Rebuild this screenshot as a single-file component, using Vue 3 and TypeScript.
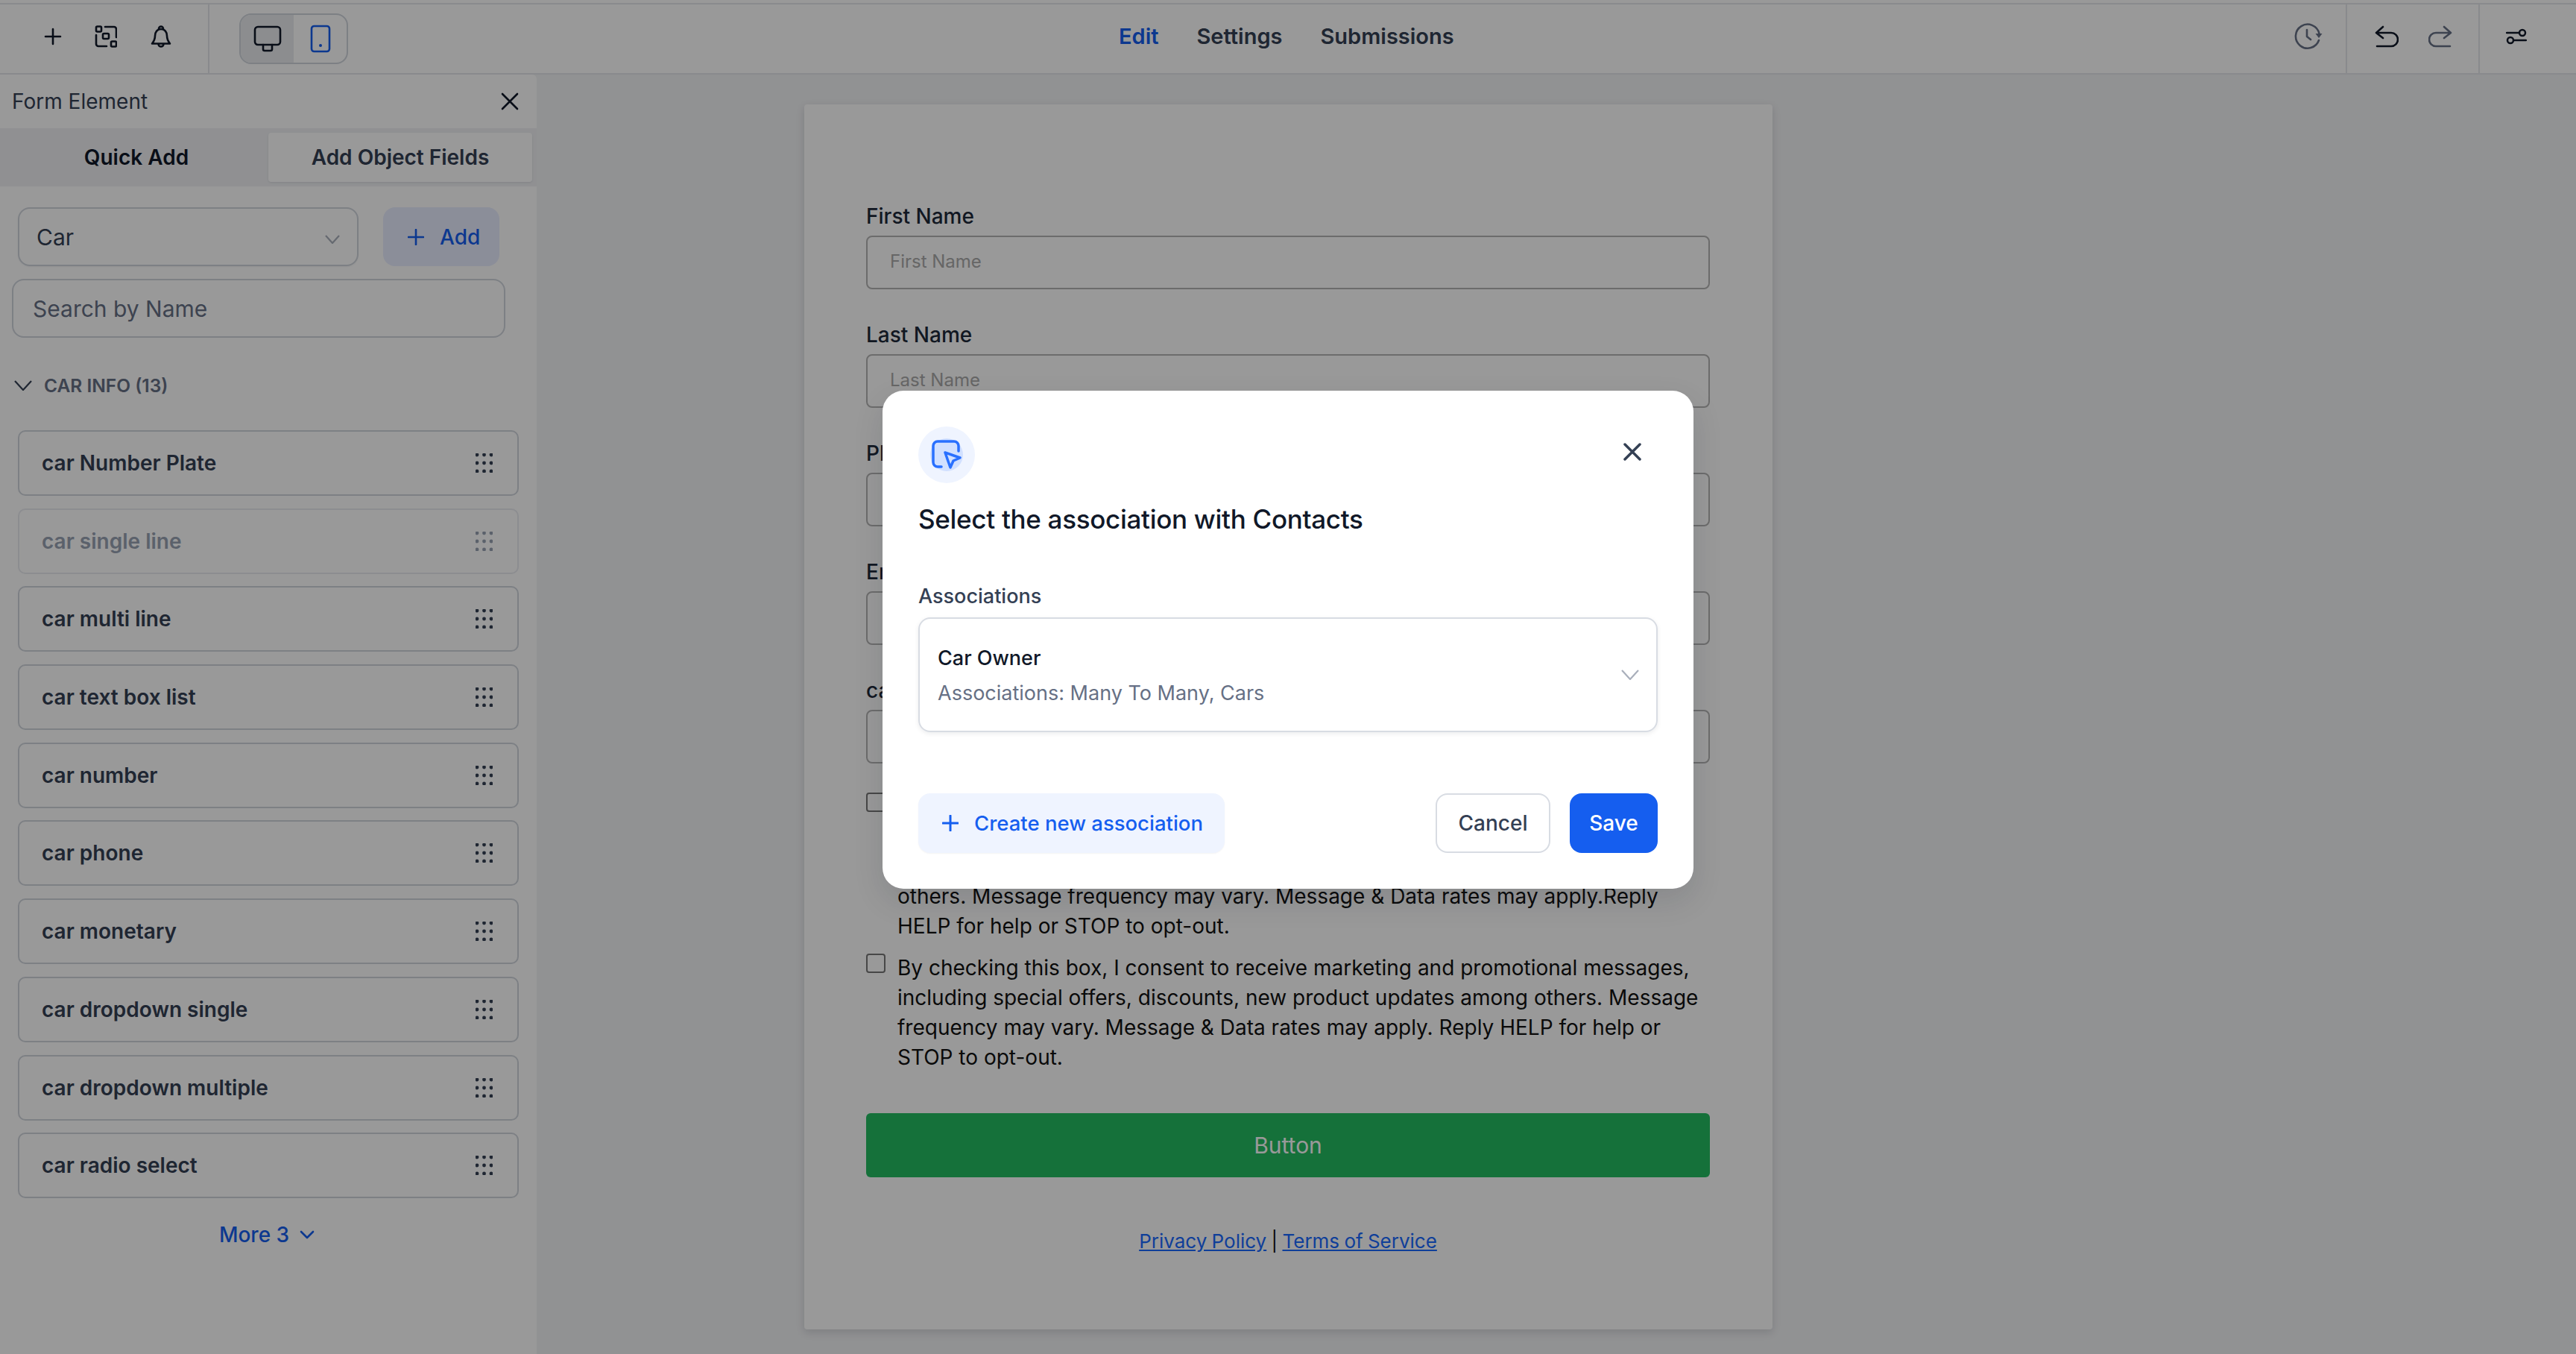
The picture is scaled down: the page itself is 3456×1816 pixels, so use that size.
<script setup lang="ts">
// form builder, with the association modal open on top
const carFields = [
  { name: 'car Number Plate', disabled: false },
  { name: 'car single line', disabled: true },
  { name: 'car multi line', disabled: false },
  { name: 'car text box list', disabled: false },
  { name: 'car number', disabled: false },
  { name: 'car phone', disabled: false },
  { name: 'car monetary', disabled: false },
  { name: 'car dropdown single', disabled: false },
  { name: 'car dropdown multiple', disabled: false },
  { name: 'car radio select', disabled: false }
]

const formFields = ['First Name', 'Last Name', 'Phone', 'Email', 'car Number Plate']
const gripDots = [0, 1, 2].flatMap(r => [0, 1, 2].map(c => ({ cx: 2 + c * 9.5, cy: 2 + r * 11 })))
</script>

<template>
  <div class="page">
    <header class="topbar">
      <div class="top-left">
        <div class="quick-icons">
          <svg class="ico" width="24" height="24" viewBox="0 0 24 24"><path d="M12 2v20M2 12h20" /></svg>
          <svg class="ico" width="30" height="30" viewBox="0 0 30 30">
            <rect x="2" y="1.5" width="7" height="7" rx="1.5" />
            <rect x="11" y="11" width="8" height="7" rx="1.5" />
            <rect x="22" y="21.500" width="7" height="7" rx="1.5" />
            <path d="M14 2h12a3 3 0 0 1 3 3v11M2 13v12a3 3 0 0 0 3 3h11" />
          </svg>
          <svg class="ico" width="30" height="32" viewBox="0 0 30 32">
            <path d="M15 6c-5 0-8 4-8 9 0 5-2 8-4 10.500h24c-2-2.500-4-5.500-4-10.500 0-5-3-9-8-9zM12 5.500a3 3 0 0 1 6 0M11.500 26a3.500 3.500 0 0 0 7 0" />
          </svg>
        </div>
        <div class="device-toggle">
          <div class="device active">
            <svg class="ico" width="38" height="36" viewBox="0 0 38 36">
              <rect x="2" y="2" width="34" height="24" rx="4" />
              <path d="M13 26v6a2 2 0 0 0 2 2h8a2 2 0 0 0 2-2v-6" />
            </svg>
          </div>
          <div class="device">
            <svg class="ico blue" width="28" height="38" viewBox="0 0 28 38">
              <rect x="2" y="2" width="24" height="34" rx="3.500" />
              <circle class="solid" cx="14" cy="28" r="2" />
            </svg>
          </div>
        </div>
      </div>
      <nav class="top-nav">
        <a class="on">Edit</a>
        <a>Settings</a>
        <a>Submissions</a>
      </nav>
      <div class="top-right">
        <div class="tool-cell history">
          <svg class="ico muted" width="38" height="36" viewBox="0 0 38 36">
            <path d="M33 23a16 16 0 1 1 .5-9M17 9v9l5 4" />
            <path class="solid" d="M28.500 14h9L33 20z" />
          </svg>
        </div>
        <div class="tool-cell undo">
          <svg class="ico" width="32" height="30" viewBox="0 0 32 30">
            <path d="M11 2 2 10l9 7M2 10h20a8 8 0 0 1 0 18H3" />
          </svg>
          <svg class="ico muted" width="32" height="30" viewBox="0 0 32 30">
            <path d="M21 2l9 8-9 7M30 10H10a8 8 0 0 0 0 18h19" />
          </svg>
        </div>
        <div class="tool-cell tune">
          <svg class="ico thin" width="28" height="22" viewBox="0 0 28 22">
            <path d="M1 6h17M11 16h16" />
            <circle cx="22" cy="6" r="4" />
            <circle cx="6" cy="16" r="4" />
          </svg>
        </div>
      </div>
    </header>

    <main class="workspace">
      <aside class="sidebar">
        <div class="side-head">
          <span>Form Element</span>
          <svg class="ico" width="24" height="24" viewBox="0 0 24 24"><path d="M2 2l20 20M22 2 2 22" /></svg>
        </div>
        <div class="side-tabs">
          <div class="side-tab current">Quick Add</div>
          <div class="side-tab raised">Add Object Fields</div>
        </div>
        <div class="object-row">
          <div class="object-select">
            <span>Car</span>
            <svg class="chev" width="20" height="12" viewBox="0 0 20 12"><path d="M1 1l9 10 9-10" /></svg>
          </div>
          <button class="add-btn">
            <svg class="ico blue" width="22" height="22" viewBox="0 0 22 22"><path d="M11 1v20M1 11h20" /></svg>
            Add
          </button>
        </div>
        <input class="search" placeholder="Search by Name" readonly />
        <div class="group-title">
          <svg class="chev dark" width="24" height="14" viewBox="0 0 24 14"><path d="M1 1l11 12L23 1" /></svg>
          <span>CAR INFO (13)</span>
        </div>
        <ul class="field-list">
          <li v-for="f in carFields" :key="f.name" class="field-item" :class="{ disabled: f.disabled }">
            <span>{{ f.name }}</span>
            <svg width="23" height="26" viewBox="0 0 23 26">
              <circle v-for="(d, i) in gripDots" :key="i" :cx="d.cx" :cy="d.cy" r="2.400" />
            </svg>
          </li>
        </ul>
        <div class="more">
          More 3
          <svg class="ico blue" width="20" height="12" viewBox="0 0 20 12"><path d="M2 2l8 8 8-8" /></svg>
        </div>
      </aside>

      <section class="canvas">
        <div class="form-card">
          <div v-for="name in formFields" :key="name" class="form-field">
            <label>{{ name }}</label>
            <input :placeholder="name" readonly />
          </div>
          <div class="consent first">
            <span class="box"></span>
            <p>By checking this box, I consent to receive non-marketing text messages from<br />
              our team, such as appointment reminders, account notifications, delivery<br />
              alerts, booking confirmations, support replies, order updates among<br />
              others. Message frequency may vary. Message &amp; Data rates may apply.Reply HELP for help or STOP to opt-out.</p>
          </div>
          <div class="consent">
            <span class="box"></span>
            <p>By checking this box, I consent to receive marketing and promotional messages, including special offers, discounts, new product updates among others. Message frequency may vary. Message &amp; Data rates may apply. Reply HELP for help or STOP to opt-out.</p>
          </div>
          <button class="submit">Button</button>
          <div class="legal"><a>Privacy Policy</a> | <a>Terms of Service</a></div>
        </div>
      </section>
    </main>

    <div class="overlay">
      <div class="modal">
        <div class="modal-top">
          <div class="badge">
            <div class="badge-inner"></div>
            <svg width="40" height="40" viewBox="0 0 40 40">
              <path d="M13 36H8a6 6 0 0 1-6-6V8a6 6 0 0 1 6-6h22a6 6 0 0 1 6 6v7" />
              <path d="M18 17l20 7-9 4-4 9z" />
            </svg>
          </div>
          <svg class="modal-close" width="24" height="24" viewBox="0 0 24 24"><path d="M2 2l20 20M22 2 2 22" /></svg>
        </div>
        <h2>Select the association with Contacts</h2>
        <div class="assoc-label">Associations</div>
        <div class="assoc-select">
          <div>
            <div class="assoc-name">Car Owner</div>
            <div class="assoc-meta">Associations: Many To Many, Cars</div>
          </div>
          <svg class="chev" width="24" height="14" viewBox="0 0 24 14"><path d="M1 1l11 12L23 1" /></svg>
        </div>
        <div class="modal-foot">
          <button class="create">
            <svg width="22" height="22" viewBox="0 0 22 22"><path d="M11 1v20M1 11h20" /></svg>
            Create new association
          </button>
          <div class="foot-right">
            <button class="cancel">Cancel</button>
            <button class="save">Save</button>
          </div>
        </div>
      </div>
    </div>
  </div>
</template>

<style>
html, body { margin: 0; background: #fff; }
</style>

<style scoped>
* { box-sizing: border-box; }

.page {
  position: relative;
  width: 3456px;
  height: 1816px;
  overflow: hidden;
  background: #f2f3f5;
  font-family: Inter, "Noto Sans", sans-serif;
  color: #101828;
}

.ico { fill: none; stroke: #101828; stroke-width: 2.600; stroke-linecap: round; stroke-linejoin: round; }
.ico.blue { stroke: #155eef; }
.ico.muted { stroke: #667085; }
.ico.thin { stroke-width: 2.500; }
.ico .solid { fill: currentColor; stroke: none; }
.ico.blue .solid { fill: #155eef; }
.ico.muted .solid { fill: #667085; }
.chev { fill: none; stroke: #a9afbb; stroke-width: 2.200; }
.chev.dark { stroke: #344054; }

/* top bar */
.topbar {
  position: relative;
  height: 96px;
  display: flex;
  justify-content: space-between;
  background: #fff;
  border-top: 2px solid #e4e7ec;
  border-bottom: 2px solid #e4e7ec;
  margin-top: 4px;
}
.page::before {
  content: "";
  position: absolute;
  left: 0;
  right: 0;
  top: 0;
  height: 4px;
  background: #fff;
}
.top-left { display: flex; align-items: center; }
.quick-icons {
  width: 281px;
  height: 100%;
  display: flex;
  align-items: center;
  gap: 44px;
  padding: 0 0 6px 59px;
  border-right: 2px solid #e4e7ec;
}
.device-toggle {
  display: flex;
  width: 146px;
  height: 68px;
  margin-left: 40px;
  border: 2px solid #d0d5dd;
  border-radius: 16px;
  overflow: hidden;
}
.device { flex: 1; display: flex; align-items: center; justify-content: center; }
.device.active { background: #e9ebee; }
.top-nav {
  position: absolute;
  left: 1501px;
  top: 0;
  height: 100%;
  display: flex;
  align-items: center;
  gap: 51px;
  padding-bottom: 8px;
  font-size: 29px;
  font-weight: 600;
  color: #344054;
}
.top-nav .on { color: #155eef; }
.top-right { display: flex; height: 100%; }
.tool-cell { display: flex; align-items: center; padding-bottom: 6px; }
.history { padding-right: 31px; border-right: 2px solid #e4e7ec; }
.undo { width: 178px; gap: 40px; padding-left: 37px; border-right: 2px solid #e4e7ec; }
.tune { width: 129px; padding-left: 35px; }

/* sidebar */
.workspace { display: flex; height: 1716px; }
.sidebar {
  width: 720px;
  flex: none;
  background: #fff;
  border-top-right-radius: 6px;
}
.side-head {
  height: 72px;
  display: flex;
  align-items: center;
  justify-content: space-between;
  padding: 0 24px 0 16px;
  font-size: 28px;
  color: #344054;
}
.side-tabs {
  height: 78px;
  display: flex;
  padding: 6px;
  padding-left: 0;
  background: #f0f1f4;
  font-size: 28px;
  font-weight: 600;
}
.side-tab { flex: none; display: flex; align-items: center; justify-content: center; border-radius: 4px; }
.side-tab.current { width: 360px; padding-left: 6px; }
.side-tab.raised { width: 354px; background: #fff; color: #344054; box-shadow: 0 1px 3px rgba(16, 24, 40, 0.1); }
.object-row { display: flex; gap: 33px; margin: 28px 0 17px 24px; }
.object-select {
  width: 457px;
  height: 79px;
  display: flex;
  align-items: center;
  justify-content: space-between;
  padding: 0 23px 0 23px;
  border: 2px solid #d0d5dd;
  border-radius: 16px;
  font-size: 30px;
  color: #344054;
  box-shadow: 0 1px 2px rgba(16, 24, 40, 0.05);
}
.object-select span { padding-top: 1px; }
.object-select .chev { margin-top: 6px; }
.add-btn {
  width: 156px;
  height: 79px;
  display: flex;
  align-items: center;
  gap: 21px;
  padding: 0 0 0 33px;
  border: 0;
  border-radius: 16px;
  background: #e8edff;
  color: #155eef;
  font: 500 28px Inter, sans-serif;
}
.search {
  display: block;
  width: 662px;
  height: 79px;
  margin-left: 16px;
  padding: 0 26px;
  border: 2px solid #d0d5dd;
  border-radius: 16px;
  outline: 0;
  background: #fff;
  font: 400 30px Inter, sans-serif;
}
.search::placeholder { color: #667085; opacity: 1; }
.group-title {
  display: flex;
  align-items: center;
  gap: 16px;
  margin: 50px 0 46px 19px;
  height: 28px;
  font-size: 24.500px;
  font-weight: 600;
  color: #667085;
}
.field-list { list-style: none; margin: 0 0 0 24px; padding: 0; width: 672px; display: flex; flex-direction: column; gap: 16.700px; }
.field-item {
  height: 88px;
  display: flex;
  align-items: center;
  justify-content: space-between;
  padding: 0 33px 0 30px;
  border: 2px solid #d0d5dd;
  border-radius: 10px;
  font-size: 28px;
  font-weight: 600;
  color: #344054;
}
.field-item svg { fill: #344054; }
.field-item.disabled { border-color: #eaecf0; color: #98a2b3; }
.field-item.disabled svg { fill: #98a2b3; }
.more {
  display: flex;
  align-items: center;
  justify-content: center;
  gap: 14px;
  margin: 32px 0 0 -4px;
  font-size: 28px;
  font-weight: 500;
  color: #155eef;
}

/* form preview */
.canvas { flex: 1; padding: 40px 0 0 359px; }
.form-card {
  width: 1299px;
  height: 1643px;
  padding: 132px 84px 0 83px;
  background: #fff;
  border-radius: 4px;
  box-shadow: 0 4px 12px rgba(16, 24, 40, 0.14);
}
.form-field { height: 159px; }
.form-field label { display: block; height: 44px; font-size: 28px; font-weight: 500; line-height: 36px; color: #1d2939; }
.form-field input {
  display: block;
  width: 100%;
  height: 72px;
  padding: 0 30px 3px;
  border: 2px solid #b4b4b4;
  border-radius: 8px;
  outline: 0;
  background: #fff;
  font: 400 24px Inter, sans-serif;
}
.form-field input::placeholder { color: #aaa; opacity: 1; }
.consent { display: flex; gap: 16px; font-size: 28px; line-height: 40px; color: #111; }
.consent.first { margin-top: -5px; margin-bottom: 16px; }
.consent p { margin: 0; }
.box { flex: none; width: 26px; height: 26px; margin-top: 1px; border: 2px solid #777; border-radius: 4px; background: #fff; }
.submit {
  display: block;
  width: 100%;
  height: 86px;
  margin-top: 55px;
  border: 0;
  border-radius: 6px;
  background: #23bc62;
  color: #fff;
  font: 400 30px Inter, sans-serif;
}
.legal { margin-top: 68px; text-align: center; font-size: 26px; line-height: 36px; word-spacing: -1px; color: #111; }
.legal a { color: #1a69ff; text-decoration: underline; }

/* modal */
.overlay {
  position: absolute;
  inset: 0;
  display: flex;
  justify-content: center;
  align-items: flex-start;
  padding-top: 524px;
  background: rgba(0, 0, 0, 0.4);
}
.modal {
  width: 1088px;
  height: 668px;
  padding: 48px 48px 0 48px;
  background: #fff;
  border-radius: 28px;
  box-shadow: 0 16px 40px rgba(16, 24, 40, 0.12);
}
.modal-top { display: flex; justify-content: space-between; align-items: flex-start; height: 76px; }
.badge {
  position: relative;
  width: 76px;
  height: 76px;
  border-radius: 50%;
  background: #eff4ff;
  display: flex;
  align-items: center;
  justify-content: center;
}
.badge-inner { position: absolute; inset: 16px; border-radius: 50%; background: #d1e0ff; }
.badge svg { position: relative; fill: none; stroke: #2970ff; stroke-width: 3.500; stroke-linecap: round; stroke-linejoin: round; }
.modal-close { margin: 22px 22px 0 0; fill: none; stroke: #344054; stroke-width: 3.500; stroke-linecap: round; }
h2 { margin: 24px 0 0; font-size: 35px; letter-spacing: -0.3px; line-height: 48px; font-weight: 500; color: #101828; }
.assoc-label { margin-top: 60px; font-size: 27px; line-height: 40px; font-weight: 500; color: #344054; }
.assoc-select {
  height: 154px;
  margin-top: 8px;
  display: flex;
  align-items: center;
  justify-content: space-between;
  padding: 0 23px 0 24px;
  border: 2px solid #d8dce3;
  border-radius: 16px;
  box-shadow: 0 2px 6px rgba(16, 24, 40, 0.08);
}
.assoc-select > div { padding-top: 3px; }
.assoc-name { font-size: 27px; line-height: 40px; font-weight: 500; color: #101828; }
.assoc-meta { margin-top: 7px; font-size: 27px; line-height: 40px; color: #667085; }
.modal-foot { display: flex; justify-content: space-between; margin-top: 82px; }
.foot-right { display: flex; gap: 26px; }
.modal-foot button {
  height: 80px;
  display: flex;
  align-items: center;
  justify-content: center;
  border-radius: 16px;
  font: 500 28px Inter, sans-serif;
}
.modal-foot .create { width: 411px; gap: 21px; padding: 0 0 0 32px; justify-content: flex-start; border: 0; background: #eff4ff; color: #155eef; box-shadow: 0 1px 2px rgba(16, 24, 40, 0.05); font-size: 27.500px; }
.create svg { fill: none; stroke: #155eef; stroke-width: 3; stroke-linecap: round; }
.cancel { width: 154px; border: 2px solid #d8dce3; background: #fff; color: #344054; }
.save { width: 118px; border: 0; background: #155eef; color: #fff; }
</style>
